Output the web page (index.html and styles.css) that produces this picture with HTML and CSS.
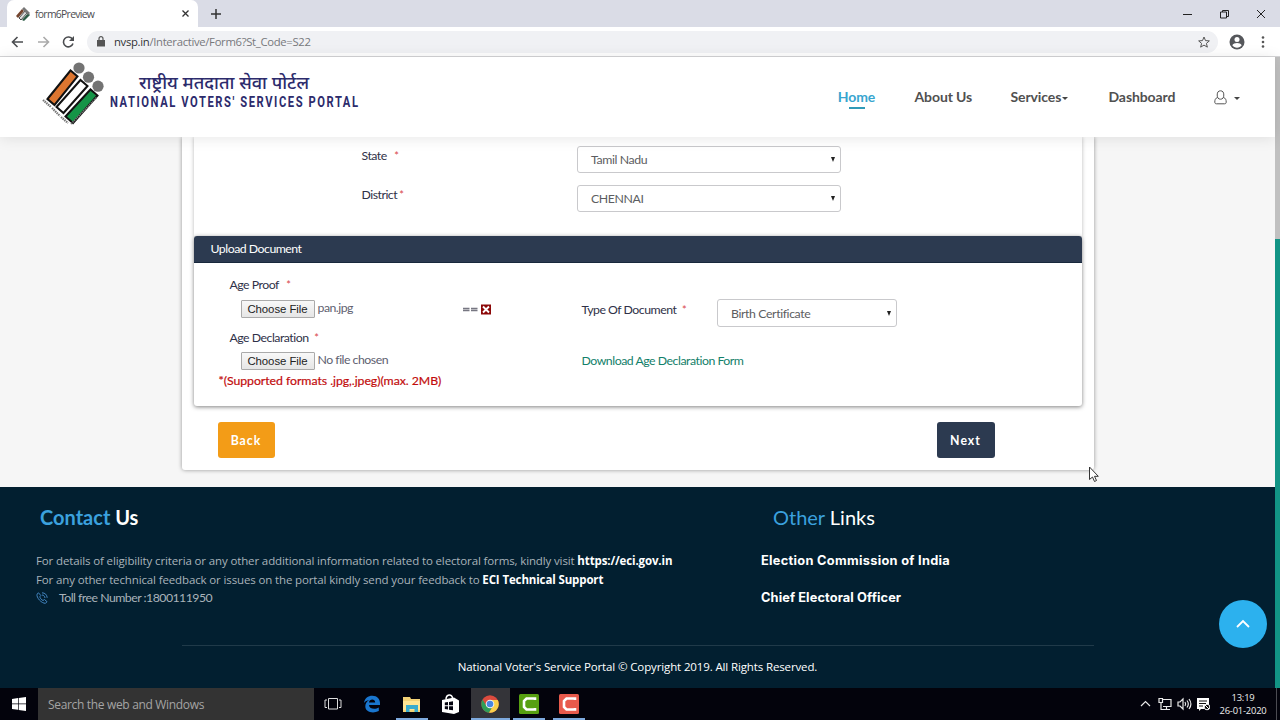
FILE: index.html
```html
<!DOCTYPE html>
<html lang="en">
<head>
<meta charset="utf-8">
<title>form6Preview</title>
<link rel="stylesheet" href="styles.css">
</head>
<body>
<div class="tabstrip">
  <div class="tab">
    <svg class="favicon" width="14" height="14" viewBox="0 0 14 14"><path d="M0 9 6 2 8 4 2 11z" fill="#75452f"/><path d="M3 11 9 4 11 6 5 13z" fill="#ddd" stroke="#222" stroke-width=".8"/><path d="M6 13 12 6 14 8 8 14z" fill="#2c5b46"/><path d="m6 2 2-2 6 6-2 2z" fill="#777"/></svg>
    <span class="tab-title">form6Preview</span>
    <svg width="9" height="9" viewBox="0 0 9 9"><path d="m1.500 1.500 6 6m0-6-6 6" stroke="#333" stroke-width="1.300"/></svg>
  </div>
  <svg class="newtab" width="12" height="12" viewBox="0 0 12 12"><path d="M6 1v10M1 6h10" stroke="#333" stroke-width="1.5"/></svg>
  <svg class="winctl" width="84" height="12" viewBox="0 0 84 12"><g fill="none" stroke="#222"><path d="M0 6.500h9"/><path d="M37.500 4h6v6h-6zM39.500 4V2.500h6v6h-2"/><path d="m74 2 8 8m0-8-8 8"/></g></svg>
</div>
<div class="toolbar">
  <svg class="navicons" width="66" height="16" viewBox="0 0 66 16"><g fill="none" stroke-width="1.6"><path d="M12 8H1.500M6.500 3l-5 5 5 5" stroke="#4b4d50"/><path d="M27 8h10.500M32.500 3l5 5-5 5" stroke="#aaa"/><path d="M61.500 5.300A4.900 4.900 0 1 0 62 9.500" stroke="#4b4d50"/></g><path d="M63 2v5h-5z" fill="#4b4d50"/></svg>
  <div class="omnibox">
    <svg width="8" height="11" viewBox="0 0 8 11"><path d="M0 4h8v6.500H0z" fill="#555"/><path d="M2 4V2.700a2 2 0 0 1 4 0V4" fill="none" stroke="#555" stroke-width="1.200"/></svg>
    <span class="url"><b>nvsp.in</b>/Interactive/Form6?St_Code=S22</span>
    <svg class="star" width="12" height="12" viewBox="0 0 24 24"><path d="m12 2 3 7.200 7.700.6-5.900 5 1.900 7.500L12 18.200l-6.700 4.100 1.900-7.500-5.900-5 7.700-.6z" fill="none" stroke="#555" stroke-width="2"/></svg>
  </div>
  <svg width="16" height="16" viewBox="0 0 16 16"><circle cx="8" cy="8" r="7.500" fill="#55575b"/><circle cx="8" cy="5.500" r="2.500" fill="#fff"/><path d="M3.300 11.200c1.500-3 8-3 9.400 0a5.600 5.600 0 0 1-9.400 0z" fill="#fff"/></svg>
  <svg class="dots" width="4" height="12" viewBox="0 0 4 12"><g fill="#555"><circle cx="2" cy="1.500" r="1.300"/><circle cx="2" cy="6" r="1.300"/><circle cx="2" cy="10.500" r="1.300"/></g></svg>
</div>
<div class="viewport">
  <div class="page">
    <header class="site-header">
      <svg class="logo" width="330" height="79" viewBox="0 0 330 79">
        <g stroke="#111" stroke-width="2">
          <path d="M12.500 42 35.500 13.500 42.500 19.500 19.500 48z" fill="#dd7630"/>
          <path d="M21.500 50 45.500 23 52.500 29 28.500 56z" fill="#fff"/>
          <path d="M30.500 59.500 55.500 32.500 62.500 38.500 38 66z" fill="#159447"/>
        </g>
        <g fill="#737373"><circle cx="44" cy="11" r="5.600"/><circle cx="53.500" cy="20.200" r="5.600"/><circle cx="63" cy="29.200" r="5.600"/></g>
        <path d="m8 43 8 7m1 1 8 8m1 1 7 6" fill="none" stroke="#777" stroke-width="2.200" stroke-dasharray="1.500 .7"/>
        <path d="m36 67 26-27" fill="none" stroke="#777" stroke-width="1.600" stroke-dasharray="1.500 .7"/>
        <text class="logo-hi" x="104" y="32" textLength="170" lengthAdjust="spacingAndGlyphs">राष्ट्रीय मतदाता सेवा पोर्टल</text>
        <text class="logo-en" transform="translate(75 49.500) scale(.8 1)" textLength="310" lengthAdjust="spacing">NATIONAL VOTERS' SERVICES PORTAL</text>
      </svg>
      <nav class="menu">
        <a class="active">Home</a><a class="about">About Us</a><a class="services">Services<i class="caret"></i></a><a class="dash">Dashboard</a>
        <a class="user"><svg width="13" height="15" viewBox="0 0 13 15"><g fill="none" stroke="#555"><ellipse cx="6.500" cy="5" rx="3.300" ry="4.200"/><path d="M3.500 7.500C1.300 8.200.8 10 .8 12c0 1.200.5 1.800 1.700 1.800h8c1.200 0 1.700-.6 1.700-1.800 0-2-.5-3.800-2.700-4.500"/></g></svg><i class="caret"></i></a>
      </nav>
    </header>
    <main class="main">
      <div class="sheet">
        <section class="panel address">
          <div class="field"><label>State <em class="gap">*</em></label><div class="select">Tamil Nadu<i></i></div></div>
          <div class="field"><label>District<em>*</em></label><div class="select">CHENNAI<i></i></div></div>
        </section>
        <section class="panel upload">
          <h2>Upload Document</h2>
          <div class="upload-body">
            <div class="files">
              <label>Age Proof <em class="gap">*</em></label>
              <div class="file"><button>Choose File</button><span class="fname">pan.jpg</span>
                <svg class="remove" width="29" height="11" viewBox="0 0 29 11"><path d="M1 4.500h6.500M1 6.500h6.500M9 4.500h6.500M9 6.500h6.500" stroke="#777782" stroke-width="1.500"/><path d="M19 .5h10v10H19z" fill="#8c0808"/><path d="m21 2.500 6 6m0-6-6 6" stroke="#fff" stroke-width="1.900"/></svg></div>
              <label class="decl">Age Declaration <em class="near">*</em></label>
              <div class="file short"><button>Choose File</button><span>No file chosen</span></div>
              <p class="note">*(Supported formats .jpg,.jpeg)(max. 2MB)</p>
            </div>
            <div class="doc">
              <div class="doc-type"><label>Type Of Document <em class="near">*</em></label><div class="select small">Birth Certificate<i></i></div></div>
              <a class="download">Download Age Declaration Form</a>
            </div>
          </div>
        </section>
        <div class="actions"><button class="btn back">Back</button><button class="btn next">Next</button></div>
      </div>
    </main>
    <footer class="footer">
      <div class="cols">
        <div class="contact">
          <h3><span>Contact</span> Us</h3>
          <p class="l1">For details of eligibility criteria or any other additional information related to electoral forms, kindly visit <b>https://eci.gov.in</b></p>
          <p class="l2">For any other technical feedback or issues on the portal kindly send your feedback to <b>ECI Technical Support</b></p>
          <p class="toll"><svg width="12" height="12" viewBox="0 0 12 12"><g fill="none" stroke="#4385c0"><path d="M2.500.8 1 2.200C.2 5.500 5.500 11.500 9.500 11.300l1.500-1.600-2.500-2.200-1.500 1C5.500 8 4 6 3.800 4.800l1-1.300z"/><path d="M6 .8c3 0 5 2 5.200 5M6 3c1.800 0 2.800 1.200 3 3"/></g></svg><span>Toll free Number :1800111950</span></p>
        </div>
        <div class="links">
          <h3><span>Other</span> Links</h3>
          <a class="eci">Election Commission of India</a>
          <a class="ceo">Chief Electoral Officer</a>
        </div>
      </div>
      <div class="copyright"><span>National Voter's Service Portal © Copyright 2019. All Rights Reserved.</span></div>
    </footer>
  </div>
  <div class="scrollbar"><div class="thumb"></div></div>
  <div class="totop"><svg width="16" height="10" viewBox="0 0 16 10"><path d="m2 8 6-6 6 6" fill="none" stroke="#fff" stroke-width="1.800"/></svg></div>
  <svg class="cursor" width="12" height="18" viewBox="0 0 12 18"><path d="M1.500 1v12.500l3-2.500 2 4.500 2-1-2-4.200h3.800z" fill="#fff" stroke="#333"/></svg>
</div>
<div class="taskbar">
  <div class="start"><svg width="14" height="14" viewBox="0 0 14 14"><path d="M0 2 6 1.100V6.600H0zM6.700 1 14 0v6.600H6.700zM0 7.300h6v5.500L0 12zM6.700 7.300H14V14l-7.300-1z" fill="#fff"/></svg></div>
  <div class="search">Search the web and Windows</div>
  <div class="apps">
    <span class="app"><svg width="18" height="14" viewBox="0 0 18 14"><path d="M4.500 1.500h9v10.500h-9zM3 3H1v7.500h2M15 3h2v7.500h-2" fill="none" stroke="#ddd"/></svg></span>
    <span class="app"><svg width="18" height="18" viewBox="0 0 18 18"><path d="M1 8C1.800 3 5 .8 9.300.8c5 0 7.700 3.500 7.700 7.200v2H6c.2 4 6 5 9.800 2.500v3.600C9.500 19 2.300 17 2.300 11.200c0-3 1.700-5 4-6.200C3.800 5.300 2 6.500 1 8zm5-.6h6.200C12 3.500 6.500 3.800 6 7.400z" fill="#1976cf"/></svg></span>
    <span class="app run"><svg width="18" height="15" viewBox="0 0 18 15"><path d="M0 0h7l1 2h9v13H0z" fill="#f3d276"/><path d="M0 4h17v9H0z" fill="#ffe694"/><path d="M3 15V8h12v7h-3.500v-3h-5v3z" fill="#39acce"/></svg></span>
    <span class="app"><svg width="18" height="20" viewBox="0 0 18 20"><path d="M0 6 12 3.500 17 6.500V18l-5 2-12-2z" fill="#fff"/><path d="M4 5.500C4 0 10-.5 10.500 4" fill="none" stroke="#fff" stroke-width="1.500"/><path d="M2.800 8.500 6 8v3.300H2.800zM7 7.900l4-.6v4H7zM2.800 12.300H6v3.300l-3.200-.5zM7 12.300h4v4l-4-.5z" fill="#050510"/></svg></span>
    <span class="app run focus"><svg width="18" height="18" viewBox="0 0 18 18"><circle cx="9" cy="9" r="8.700" fill="#dc4b3e"/><path d="M1.500 4.600A8.700 8.700 0 0 0 8 17.700L12 11 5.500 11z" fill="#2f9e58"/><path d="M9 5h7.700A8.700 8.700 0 0 1 8 17.700L12.500 10z" fill="#fad04b"/><circle cx="9" cy="9" r="4.300" fill="#f4f4f4"/><circle cx="9" cy="9" r="3.300" fill="#4a86e0"/></svg></span>
    <span class="app run narrow"><svg width="20" height="20" viewBox="0 0 20 20"><rect width="20" height="20" rx="1.500" fill="#57a011"/><path d="M16 6V4.500H7.500L5 7v6l2.500 2.500H16V14" fill="none" stroke="#fff" stroke-width="2.600"/></svg></span>
    <span class="app run narrow"><svg width="20" height="20" viewBox="0 0 20 20"><rect width="20" height="20" rx="1.500" fill="#e85a4c"/><path d="M16 6V4.500H7.500L5 7v6l2.500 2.500H16V14" fill="none" stroke="#fff" stroke-width="2.600"/></svg></span>
  </div>
  <div class="tray">
    <svg width="70" height="14" viewBox="0 0 70 14"><g fill="none" stroke="#e8e8e8" stroke-width="1.200"><path d="m1 9 4.500-4.500L10 9"/><path d="M23 2.500h8v7h-8M26.500 10v2.500M24 12.500h6M19 1.500h3.500v4H19zM21 5.500v7h3"/><path d="M38 5h2l3-3v10l-3-3h-2zM45 5c1 1.500 1 2.500 0 4M47 3.500c1.500 2 1.500 5 0 7M49 2c2.300 3 2.300 7 0 10"/></g><path d="M57 1h12v7a3.500 3.500 0 0 0-5 4h-3l-2 2v-2h-2z" fill="#fff"/><path d="M59 4h8M59 6.500h7M59 9h4" stroke="#111"/><circle cx="67" cy="10" r="2.800" fill="#111" stroke="#fff"/><path d="m65 8 4 4" stroke="#fff"/></svg>
    <div class="clock"><span>13:19</span><span>26-01-2020</span></div>
    <i class="peek"></i>
  </div>
</div>
</body>
</html>
```
FILE: styles.css
```css
* { box-sizing: border-box; }
body { margin: 0; width: 1280px; height: 720px; overflow: hidden; display: flex; flex-direction: column; font-family: Lato, sans-serif; background: #fff; }
svg { display: block; flex: none; }
p, h2, h3 { margin: 0; }
button { font: inherit; padding: 0; }

.tabstrip { height: 27px; background: #dadce6; display: flex; align-items: center; padding: 0 8px 0 7px; }
.tab { width: 191px; height: 27px; background: #fff; border-radius: 7px 7px 0 0; display: flex; align-items: center; padding: 0 8px 0 9px; }
.tab-title { flex: 1; margin-left: 5px; font: 10.400px "Open Sans", sans-serif; letter-spacing: -.7px; color: #4c4c50; }
.newtab { margin-left: 12px; }
.winctl { margin-left: auto; margin-right: 5px; }
.toolbar { height: 30px; border-bottom: 1px solid #d5d5d7; display: flex; align-items: center; padding: 0 15px 0 11px; }
.navicons { margin-right: 10px; }
.omnibox { flex: 1; height: 22px; border-radius: 11px; background: #f0f1f4; display: flex; align-items: center; padding: 0 8px 0 10px; margin-right: 11px; }
.url { margin-left: 9px; font: 11.300px "Open Sans", sans-serif; letter-spacing: -.32px; color: #77787c; white-space: nowrap; }
.url b { font-weight: 400; color: #303135; }
.star { margin-left: auto; }
.dots { margin-left: 16px; }

.viewport { height: 631px; display: flex; position: relative; }
.page { width: 1275px; display: flex; flex-direction: column; }
.scrollbar { width: 5px; background: #129485; }
.thumb { height: 182px; background: #c0c0c0; }
.site-header { height: 80px; background: #fff; display: flex; align-items: flex-start; padding-left: 35px; box-shadow: 0 1px 14px rgba(0,0,0,.1); z-index: 1; }
.logo-hi { font: 500 18px "Noto Sans Devanagari", "Noto Sans", sans-serif; fill: #2c2b6c; }
.logo-en { font: 700 14px Roboto, sans-serif; fill: #2c2b6c; }
.menu { display: flex; align-items: flex-start; padding-top: 29px; margin-left: 473.500px; font-size: 14px; font-weight: 700; letter-spacing: -.1px; line-height: 22px; color: #505050; white-space: nowrap; }
.menu a { display: flex; align-items: center; }
.menu .active { color: #38a5cf; display: flex; flex-direction: column; width: 36px; }
.menu .active::after { content: ""; width: 16px; height: 2px; background: #309ab8; margin-top: -1px; }
.about { margin-left: 40px; width: 57px; }
.services { margin-left: 39px; width: 59px; }
.dash { margin-left: 39px; width: 66px; }
.user { margin-left: 39px; height: 22px; }
.caret { border: 3px solid transparent; border-top: 3px solid #444; border-bottom: 0; margin: 3px 0 0 1px; }
.user .caret { margin-left: 7px; }

.main { height: 350px; background: #f6f6f6; overflow: hidden; }
.sheet { width: 912px; height: 333px; margin-left: 181.500px; background: #fff; border-radius: 0 0 3px 3px; box-shadow: 0 0 4px rgba(0,0,0,.4); padding: 0 12px; letter-spacing: -.5px; font-variant-ligatures: common-ligatures; }
.panel { background: #fff; box-shadow: 0 1px 4px rgba(0,0,0,.5); }
.address { height: 99px; padding: 9px 0 0 168px; box-shadow: 0 0 4px rgba(0,0,0,.28); }
.field { display: flex; height: 39px; }
.field label { width: 215.500px; line-height: 20px; }
label { font-size: 12.300px; color: #2f3148; white-space: nowrap; }
em { color: #d9474c; font-style: normal; margin-left: 2px; font-size: 11px; }
.gap { margin-left: 5px; }
.near { margin-left: 3px; }
.select { width: 264px; height: 27px; border: 1px solid #c9c9cc; border-radius: 3px; display: flex; align-items: center; justify-content: space-between; padding: 0 5px 0 13px; font-size: 12.300px; letter-spacing: -.4px; color: #5c5d61; background: #fff; }
.select i { border: 2.500px solid transparent; border-top: 5px solid #222; border-bottom: 0; }
.upload { height: 170px; border-radius: 3px; }
.upload h2 { height: 27px; background: #2c3a50; border-radius: 3px 3px 0 0; color: #fff; font-size: 12.300px; font-weight: 400; line-height: 26px; padding-left: 17px; border-bottom: 1px solid #18283c; }
.upload-body { display: flex; }
.files { width: 352px; padding: 12px 0 0 36px; display: flex; flex-direction: column; }
.files label { line-height: 20px; height: 21px; }
.file { height: 26px; display: flex; align-items: center; padding-left: 11px; color: #606170; font-size: 12.300px; }
.file span { margin-top: -3px; }
.file button { width: 74px; height: 18px; background: linear-gradient(#f8f8f8, #e6e6e6); border: 1px solid #aaa; border-radius: 1px; font: 11.400px "Liberation Sans", sans-serif; letter-spacing: -.05px; color: #222; margin-right: 3px; }
.fname { width: 144px; }
.files .decl { line-height: 31px; height: 30px; }
.file.short { height: 18px; }
.note { color: #c20c0c; font-size: 12.300px; line-height: 21px; letter-spacing: -.05px; -webkit-text-stroke: .2px #c20c0c; margin-left: -11px; white-space: nowrap; }
.doc { padding: 36px 0 0 36px; }
.doc-type { display: flex; }
.doc-type label { width: 135.500px; line-height: 21px; }
.select.small { width: 180px; height: 28px; }
.download { display: block; margin-top: 24px; font-size: 12.300px; line-height: 19px; letter-spacing: -.48px; color: #13806a; }
.actions { display: flex; justify-content: space-between; padding: 16px 87px 0 24px; }
.btn { width: 57px; height: 36px; border: 0; border-radius: 3px; color: #fff; font-size: 12.300px; font-weight: 700; letter-spacing: 1px; }
.back { background: #f39c17; }
.next { background: #2c3a50; width: 58px; }

.footer { height: 201px; background: #021f30; color: #fff; display: flex; flex-direction: column; }
.cols { display: flex; height: 158px; }
.contact { width: 725px; padding: 17px 0 0 36px; }
.links { padding: 17px 0 0 36px; }
h3 { font-size: 20px; line-height: 27px; padding-left: 4px; font-weight: 700; }
.links h3 { font-weight: 400; padding-left: 12px; }
h3 span { color: #3ba1de; }
.contact p { font: 11.500px/19px "Open Sans", sans-serif; letter-spacing: -.13px; color: #a9b3ba; white-space: nowrap; }
.contact p b { color: #fff; }
.contact .l1 { margin-top: 20px; }
.contact .toll { display: flex; align-items: center; gap: 11px; font-family: Lato, sans-serif; font-size: 12.300px; line-height: 18px; letter-spacing: -.52px; }
.links a { display: block; font: 700 12.800px/20px Inter, sans-serif; white-space: nowrap; }
.links .eci { margin-top: 20px; letter-spacing: .3px; }
.links .ceo { margin-top: 17px; letter-spacing: .1px; }
.copyright { width: 912px; margin-left: 181.500px; border-top: 1px solid #203a49; text-align: center; font: 11.500px/41px "Open Sans", sans-serif; letter-spacing: -.13px; }
.totop { position: absolute; left: 1219px; top: 543px; width: 48px; height: 48px; border-radius: 50%; background: #2cb1ee; display: flex; align-items: center; justify-content: center; z-index: 2; }
.cursor { position: absolute; left: 1088px; top: 409px; z-index: 2; }

.taskbar { height: 32px; background: #03030c; display: flex; font-family: "Open Sans", sans-serif; }
.start { width: 38px; display: flex; align-items: center; justify-content: center; }
.search { width: 276px; background: #333; color: #a4a4a4; font-size: 12px; letter-spacing: -.33px; line-height: 34px; padding-left: 10px; }
.apps { display: flex; margin-left: -.7px; }
.app { width: 39.300px; height: 32px; display: flex; align-items: center; justify-content: center; }
.run { background: linear-gradient(#7eaade, #7eaade) bottom / 32px 2px no-repeat; }
.focus { background-color: #343439; background-size: 100% 2px; }
.tray { margin-left: auto; display: flex; align-items: center; width: 140px; }
.clock { margin-left: 9px; width: 48px; display: flex; flex-direction: column; align-items: center; font-size: 9.400px; letter-spacing: -.2px; line-height: 13px; color: #eee; white-space: nowrap; }
.peek { width: 1px; height: 32px; margin-left: 9px; background: #4b4b52; }
```
